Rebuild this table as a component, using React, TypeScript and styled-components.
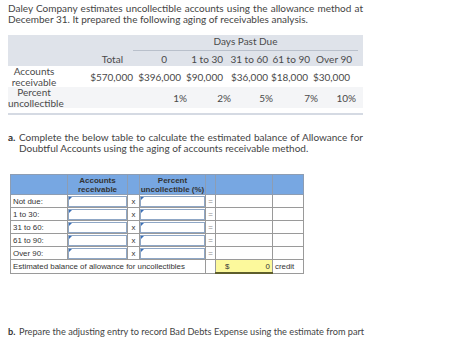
import styled, { createGlobalStyle } from "styled-components";

const GlobalStyle = createGlobalStyle`
  body { margin: 0; background: #fff; }
`;

const buckets = [
  { label: "Not due:" },
  { label: "1 to 30:" },
  { label: "31 to 60:" },
  { label: "61 to 90:" },
  { label: "Over 90:" },
];

const AGING_COLS = "52px 73px 48px 42px 45px 42px 42px 11px";
const PERCENT_COLS = "52px 127px 44px 42px 45px 38px 7px";

function App() {
  return (
    <Page>
      <GlobalStyle />
      <Intro>
        Daley Company estimates uncollectible accounts using the allowance method at December 31. It prepared the
        following aging of receivables analysis.
      </Intro>

      <AgingTable>
        <HeaderBand>
          <DaysRow>
            <DaysTitle>Days Past Due</DaysTitle>
          </DaysRow>
          <GridRow $cols={AGING_COLS} $h={15}>
            <span />
            <Cell $pr={10}>Total</Cell>
            <Cell $pr={14}>0</Cell>
            <Cell>1 to 30</Cell>
            <Cell>31 to 60</Cell>
            <Cell>61 to 90</Cell>
            <Cell>Over 90</Cell>
            <span />
          </GridRow>
        </HeaderBand>
        <GridRow $cols={AGING_COLS} $h={21}>
          <RowLabel>Accounts receivable</RowLabel>
          <Cell>$570,000</Cell>
          <Cell>$396,000</Cell>
          <Cell>$90,000</Cell>
          <Cell>$36,000</Cell>
          <Cell $pr={2}>$18,000</Cell>
          <Cell $pr={2}>$30,000</Cell>
          <span />
        </GridRow>
        <GridRow $cols={PERCENT_COLS} $h={21} $bg="#f4f5f7">
          <RowLabel>Percent uncollectible</RowLabel>
          <Cell>1%</Cell>
          <Cell>2%</Cell>
          <Cell>5%</Cell>
          <Cell>7%</Cell>
          <Cell>10%</Cell>
          <span />
        </GridRow>
        <TableRule />
      </AgingTable>

      <Question>
        <Letter>a.</Letter>
        <QuestionText>
          Complete the below table to calculate the estimated balance of Allowance for Doubtful Accounts using the
          aging of accounts receivable method.
        </QuestionText>
      </Question>

      <Worksheet>
        <colgroup>
          <col style={{ width: 57 }} />
          <col style={{ width: 60 }} />
          <col style={{ width: 12 }} />
          <col style={{ width: 66 }} />
          <col style={{ width: 10 }} />
          <col style={{ width: 57 }} />
          <col style={{ width: 31 }} />
        </colgroup>
        <thead>
          <tr>
            <Th />
            <Th>Accounts<br />receivable</Th>
            <Th />
            <Th>Percent<br />uncollectible (%)</Th>
            <Th />
            <Th />
            <Th />
          </tr>
        </thead>
        <tbody>
          {buckets.map((b) => (
            <tr key={b.label}>
              <Td>{b.label}</Td>
              <InputTd><Entry /></InputTd>
              <Td $align="center">x</Td>
              <InputTd><Entry /></InputTd>
              <Td $align="center" $muted>=</Td>
              <Td />
              <Td />
            </tr>
          ))}
          <tr>
            <Td colSpan={4}>Estimated balance of allowance for uncollectibles</Td>
            <Td />
            <TotalTd>
              <TotalInner>
                <span>$</span>
                <span>0</span>
              </TotalInner>
            </TotalTd>
            <Td>credit</Td>
          </tr>
        </tbody>
      </Worksheet>

      <PartB>
        <Letter>b.</Letter>
        <PlainText>Prepare the adjusting entry to record Bad Debts Expense using the estimate from part</PlainText>
      </PartB>
    </Page>
  );
}

export default App;

const Page = styled.div`
  width: 474px;
  height: 352px;
  overflow: hidden;
  box-sizing: border-box;
  padding: 3px 0 0 8px;
  font-family: Lato, "Open Sans", sans-serif;
  color: #444;
`;

const Intro = styled.p`
  margin: 0;
  width: 355px;
  font-size: 10px;
  line-height: 11px;
  text-align: justify;
`;

const AgingTable = styled.div`
  width: 355px;
  margin-top: 10px;
  font-size: 10px;
  color: #4a4a4a;
`;

const HeaderBand = styled.div`
  background: #dfe3ea;
`;

const DaysRow = styled.div`
  height: 16px;
  padding-left: 125px;
  padding-right: 5px;
  box-sizing: border-box;
`;

const DaysTitle = styled.div`
  height: 15px;
  line-height: 12px;
  text-align: center;
  border-bottom: 1px solid #b9c0cb;
`;

const GridRow = styled.div<{ $cols: string; $h: number; $bg?: string }>`
  display: grid;
  grid-template-columns: ${(p) => p.$cols};
  height: ${(p) => p.$h}px;
  align-items: center;
  background: ${(p) => p.$bg ?? "transparent"};
`;

const Cell = styled.div<{ $pr?: number }>`
  text-align: right;
  white-space: nowrap;
  padding-right: ${(p) => p.$pr ?? 0}px;
`;

const RowLabel = styled.div`
  text-align: center;
  line-height: 11px;
  font-size: 10px;
`;

const TableRule = styled.div`
  margin-top: 5px;
  height: 2px;
  background: #d5dae3;
`;

const Question = styled.div`
  display: flex;
  width: 355px;
  margin-top: 17px;
  font-size: 10px;
  line-height: 11px;
`;

const PartB = styled(Question)`
  margin-top: 52px;
  width: auto;
  font-size: 9.2px;
`;

const Letter = styled.span`
  flex: 0 0 11px;
  font-weight: 700;
  color: #333;
`;

const QuestionText = styled.span`
  flex: 1;
  text-align: justify;
`;

const PlainText = styled.span`
  white-space: nowrap;
`;

const Worksheet = styled.table`
  margin: 20px 0 0 2px;
  border-collapse: collapse;
  table-layout: fixed;
  width: 293px;
  font-family: "Liberation Sans", Arial, sans-serif;
  font-size: 7.9px;
  color: #333;
`;

const Th = styled.th`
  height: 19px;
  padding: 0;
  background: #77a7e2;
  border: 1px solid #8d9db3;
  font-weight: 700;
  font-size: 8px;
  line-height: 9px;
  white-space: nowrap;
  color: #333;
`;

const Td = styled.td<{ $align?: string; $muted?: boolean }>`
  height: 12px;
  padding: 0 2px;
  border: 1px solid #9a9a9a;
  text-align: ${(p) => p.$align ?? "left"};
  color: ${(p) => (p.$muted ? "#888" : "#333")};
  white-space: nowrap;
  overflow: hidden;
`;

const InputTd = styled.td`
  height: 12px;
  padding: 0;
  border: 1px solid #9a9a9a;
`;

const Entry = styled.div`
  position: relative;
  height: 11px;
  border: 1px solid #8fa7c6;
  box-sizing: border-box;
  background: #fff;
  &::before {
    content: "";
    position: absolute;
    left: 0;
    top: 0;
    border-top: 3px solid #3b6fb6;
    border-right: 3px solid transparent;
  }
`;

const TotalTd = styled.td`
  height: 12px;
  padding: 0;
  border: 1px solid #9a9a9a;
  background: #fcf99c;
  border-bottom: 2px solid #5e5e2c;
`;

const TotalInner = styled.div`
  display: flex;
  justify-content: space-between;
  padding: 0 2px 0 9px;
`;
